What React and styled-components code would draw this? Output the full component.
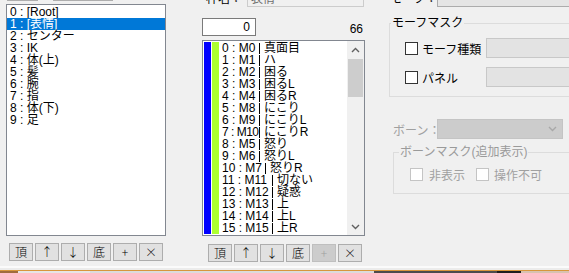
import React from 'react';
import styled, { createGlobalStyle } from 'styled-components';

const FONT = '"Liberation Sans", "Noto Sans CJK JP", sans-serif';

const GlobalStyle = createGlobalStyle`
  html, body { margin: 0; padding: 0; background: #f0f0f0; overflow: hidden; }
  body { font-family: ${FONT}; font-size: 12px; color: #000; }
  * { box-sizing: border-box; }
`;

const Screen = styled.div`
  width: 569px;
  height: 273px;
  overflow: hidden;
  display: flex;
  flex-direction: column;
  background: #f0f0f0;
`;

const Window = styled.div`
  height: 266px;
  flex-shrink: 0;
  overflow: hidden;
  display: flex;
  align-items: flex-start;
`;

const Column = styled.div`
  margin-top: -22px;
  margin-left: ${p => p.$left}px;
  width: ${p => p.$width}px;
  flex-shrink: 0;
  display: flex;
  flex-direction: column;
`;

/* ---------- buttons ---------- */
const TopButtons = styled.div`
  height: 23px;
  display: flex;
  gap: 15px;
  padding-left: 1px;
`;

const WinButton = styled.button`
  width: ${p => p.$w || 24}px;
  height: ${p => p.$h || 18}px;
  padding: 0;
  margin: 0;
  border: 1px solid ${p => (p.disabled ? '#bfbfbf' : '#adadad')};
  background: ${p => (p.disabled ? '#cccccc' : '#e1e1e1')};
  color: ${p => (p.disabled ? '#a0a0a0' : '#000')};
  font-family: "Noto Sans CJK JP", "Liberation Sans", sans-serif;
  font-size: 12px;
  font-weight: 300;
  line-height: 14px;
  display: flex;
  align-items: center;
  justify-content: center;
`;

const ButtonRow = styled.div`
  display: flex;
  gap: 2px;
  margin-top: ${p => p.$top}px;
  padding-left: ${p => p.$pad}px;
`;

/* ---------- lists ---------- */
const ListBox = styled.div`
  margin-top: ${p => p.$top}px;
  height: ${p => p.$h}px;
  border: 1px solid #828790;
  background: #fff;
  overflow: hidden;
  display: flex;
`;

const Rows = styled.div`
  flex: 1;
  padding-top: 1px;
  display: flex;
  flex-direction: column;
  min-width: 0;
`;

const TreeRow = styled.div`
  height: 12px;
  flex-shrink: 0;
  line-height: 12px;
  padding-left: 3px;
  white-space: nowrap;
  background: ${p => (p.$sel ? '#0078d7' : 'transparent')};
  color: ${p => (p.$sel ? '#fff' : '#000')};
`;

const MorphRow = styled.div`
  height: 12px;
  flex-shrink: 0;
  display: flex;
  align-items: center;
  white-space: nowrap;
  line-height: 12px;
`;

const Swatch = styled.span`
  width: 7px;
  height: 12px;
  margin-left: 1px;
  flex-shrink: 0;
  background: ${p => p.$c};
`;

const RowLabel = styled.span`
  width: ${p => p.$w}px;
  margin-left: 3px;
  flex-shrink: 0;
  letter-spacing: ${p => (p.$tight ? '-0.5px' : '0')};
`;

const Bar = styled.span`
  height: 11px;
  border-left: 1px solid #000;
  flex-shrink: 0;
`;

const RowText = styled.span`
  margin-left: 4px;
`;

const ScrollBar = styled.div`
  width: 17px;
  flex-shrink: 0;
  background: #f0f0f0;
  display: flex;
  flex-direction: column;
`;

const ScrollArrow = styled.div`
  height: 17px;
  display: flex;
  align-items: center;
  justify-content: center;
  flex-shrink: 0;
`;

const Thumb = styled.div`
  height: 38px;
  margin: 1px 1px 0 1px;
  background: #cdcdcd;
`;

const Track = styled.div`
  flex: 1;
`;

/* ---------- inputs ---------- */
const FieldRow = styled.div`
  margin-top: ${p => p.$top}px;
  height: 20px;
  display: flex;
  align-items: center;
  padding-left: ${p => p.$pad || 0}px;
`;

const FieldLabel = styled.span`
  width: ${p => p.$w}px;
  flex-shrink: 0;
  color: ${p => (p.$dim ? '#a0a0a0' : '#000')};
  white-space: nowrap;
`;

const TextBox = styled.div`
  width: ${p => p.$w}px;
  height: ${p => p.$h || 20}px;
  flex-shrink: 0;
  border: 1px solid ${p => p.$border || '#cccccc'};
  background: ${p => p.$bg || '#f0f0f0'};
  color: ${p => p.$color || '#6d6d6d'};
  display: flex;
  align-items: center;
  padding: 0 4px 0 3px;
  white-space: nowrap;
`;

const Combo = styled.div`
  width: ${p => p.$w}px;
  height: 20px;
  flex-shrink: 0;
  border: 1px solid ${p => p.$border};
  background: ${p => p.$bg};
  display: flex;
  align-items: center;
  justify-content: flex-end;
  padding-right: 5px;
`;

const NumRow = styled.div`
  margin-top: 11px;
  height: 18px;
  display: flex;
  justify-content: space-between;
  align-items: flex-end;
`;

const NumInput = styled.div`
  width: 54px;
  height: 18px;
  border: 1px solid #7a7a7a;
  background: #fff;
  display: flex;
  align-items: center;
  justify-content: flex-end;
  padding-right: 5px;
  line-height: 12px;
`;

const Count = styled.span`
  padding-right: 2px;
  padding-bottom: 1px;
  line-height: 12px;
`;

/* ---------- group boxes ---------- */
const Group = styled.fieldset`
  margin: ${p => p.$top}px 0 0 ${p => p.$left || 0}px;
  width: 220px;
  min-width: 0;
  border: 1px solid #dcdcdc;
  padding: 0 0 ${p => p.$pb}px ${p => p.$pl}px;
`;

const Legend = styled.legend`
  padding: 0 1px;
  margin-left: ${p => p.$ml}px;
  line-height: 12px;
  font-size: 12px;
  color: ${p => (p.$dim ? '#9a9a9a' : '#000')};
`;

const CheckLine = styled.div`
  display: flex;
  align-items: center;
  height: ${p => p.$h}px;
  margin-top: ${p => p.$top}px;
`;

const CheckItem = styled.label`
  display: flex;
  align-items: center;
  gap: ${p => p.$gap}px;
  width: ${p => (p.$w ? `${p.$w}px` : 'auto')};
  flex-shrink: 0;
  color: ${p => (p.$dim ? '#a0a0a0' : '#000')};
  white-space: nowrap;
`;

const Box = styled.span`
  width: 13px;
  height: 13px;
  flex-shrink: 0;
  background: #fff;
  border: 1px solid ${p => (p.$dim ? '#c4c4c4' : '#333333')};
`;

/* ---------- bottom edge ---------- */
const EdgeLine = styled.div`
  height: ${p => p.$h}px;
  flex-shrink: 0;
  background: ${p => p.$c};
`;

const Strip = styled.div`
  height: 2px;
  display: flex;
  flex-shrink: 0;
`;

const StripPart = styled.div`
  width: ${p => p.$w}px;
  background: ${p => p.$c};
  flex-shrink: 0;
`;

const Chevron = ({ up, color = '#606060' }) => (
  <svg width="9" height="6" viewBox="0 0 9 6">
    <path
      d={up ? 'M1 5 L4.5 1.5 L8 5' : 'M1 1 L4.5 4.5 L8 1'}
      fill="none"
      stroke={color}
      strokeWidth="1.4"
    />
  </svg>
);

const frames = ['0 : [Root]', '1 : [表情]', '2 : センター', '3 : IK', '4 : 体(上)', '5 : 髪', '6 : 腕', '7 : 指', '8 : 体(下)', '9 : 足'];

const morphs = [
  ['0 : M0', '真面目', 37],
  ['1 : M1', 'ハ', 37],
  ['2 : M2', '困る', 37],
  ['3 : M3', '困るL', 37],
  ['4 : M4', '困るR', 37],
  ['5 : M8', 'にこり', 37],
  ['6 : M9', 'にこりL', 37],
  ['7 : M10', 'にこりR', 37, true],
  ['8 : M5', '怒り', 37],
  ['9 : M6', '怒りL', 37],
  ['10 : M7', '怒りR', 43],
  ['11 : M11', '切ない', 50],
  ['12 : M12', '疑惑', 50],
  ['13 : M13', '上', 50],
  ['14 : M14', '上L', 50],
  ['15 : M15', '上R', 50],
];

const Buttons = ({ top, pad, plusDisabled }) => (
  <ButtonRow $top={top} $pad={pad}>
    <WinButton>頂</WinButton>
    <WinButton>↑</WinButton>
    <WinButton>↓</WinButton>
    <WinButton>底</WinButton>
    <WinButton disabled={plusDisabled}>+</WinButton>
    <WinButton>×</WinButton>
  </ButtonRow>
);

export default function App() {
  return (
    <Screen>
      <GlobalStyle />
      <Window>
        {/* left: display frames */}
        <Column $left={6} $width={160}>
          <TopButtons>
            <WinButton $w={31} $h={23} />
            <WinButton $w={60} $h={23} />
          </TopButtons>
          <ListBox $top={3} $h={232}>
            <Rows>
              {frames.map((f, i) => (
                <TreeRow key={f} $sel={i === 1}>{f}</TreeRow>
              ))}
            </Rows>
          </ListBox>
          <Buttons top={7} pad={3} />
        </Column>

        {/* middle: frame items */}
        <Column $left={36} $width={163}>
          <FieldRow $top={9} $pad={4}>
            <FieldLabel $w={41}>枠名：</FieldLabel>
            <TextBox $w={117}>表情</TextBox>
          </FieldRow>
          <NumRow>
            <NumInput>0</NumInput>
            <Count>66</Count>
          </NumRow>
          <ListBox $top={4} $h={196}>
            <Rows>
              {morphs.map(([label, text, w, tight]) => (
                <MorphRow key={label}>
                  <Swatch $c="#0000ff" />
                  <Swatch $c="#adff2f" />
                  <RowLabel $w={w} $tight={tight}>{label}</RowLabel>
                  <Bar />
                  <RowText>{text}</RowText>
                </MorphRow>
              ))}
            </Rows>
            <ScrollBar>
              <ScrollArrow><Chevron up /></ScrollArrow>
              <Thumb />
              <Track />
              <ScrollArrow><Chevron /></ScrollArrow>
            </ScrollBar>
          </ListBox>
          <Buttons top={8} pad={6} plusDisabled />
        </Column>

        {/* right: morph / bone */}
        <Column $left={24} $width={220}>
          <FieldRow $top={9} $pad={1}>
            <FieldLabel $w={47}>モーフ：</FieldLabel>
            <Combo $w={160} $bg="#e5e5e5" $border="#acacac">
              <Chevron color="#404040" />
            </Combo>
          </FieldRow>
          <Group $top={10} $pl={15} $pb={9}>
            <Legend $ml={-14}>モーフマスク</Legend>
            <CheckLine $h={20} $top={9}>
              <CheckItem $gap={4} $w={81}>
                <Box />
                モーフ種類
              </CheckItem>
              <TextBox $w={120} $bg="#e3e3e3" $border="#c8c8c8" />
            </CheckLine>
            <CheckLine $h={20} $top={9}>
              <CheckItem $gap={4} $w={81}>
                <Box />
                パネル
              </CheckItem>
              <TextBox $w={120} $bg="#e3e3e3" $border="#c8c8c8" />
            </CheckLine>
          </Group>
          <FieldRow $top={22} $pad={4}>
            <FieldLabel $w={44} $dim>ボーン：</FieldLabel>
            <Combo $w={126} $bg="#cccccc" $border="#c4c4c4">
              <Chevron color="#a8a8a8" />
            </Combo>
          </FieldRow>
          <Group $top={7} $left={4} $pl={16} $pb={12}>
            <Legend $ml={-11} $dim>ボーンマスク(追加表示)</Legend>
            <CheckLine $h={13} $top={10}>
              <CheckItem $gap={6} $w={66} $dim>
                <Box $dim />
                非表示
              </CheckItem>
              <CheckItem $gap={5} $dim>
                <Box $dim />
                操作不可
              </CheckItem>
            </CheckLine>
          </Group>
        </Column>
      </Window>
      <EdgeLine $h={2} $c="#fbfbfb" />
      <EdgeLine $h={2} $c="#ececec" />
      <EdgeLine $h={1} $c="#d8963c" />
      <Strip>
        <StripPart $w={18} $c="#a06c3c" />
        <StripPart $w={72} $c="#e6e6e6" />
        <StripPart $w={284} $c="#dcdcdc" />
        <StripPart $w={123} $c="#4c4c4c" />
        <StripPart $w={24} $c="#1e1e1e" />
        <StripPart $w={48} $c="#d8c2b0" />
      </Strip>
    </Screen>
  );
}
